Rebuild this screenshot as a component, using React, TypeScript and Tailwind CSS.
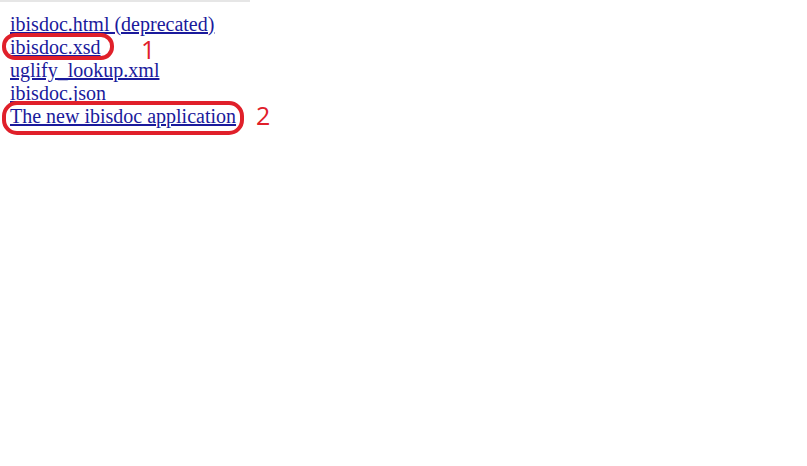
const links = [
  "ibisdoc.html (deprecated)",
  "ibisdoc.xsd",
  "uglify_lookup.xml",
  "ibisdoc.json",
  "The new ibisdoc application",
];

const App = () => {
  return (
    <div className="relative w-[807px] h-[466px] bg-white overflow-hidden">
      <div className="w-[250px] h-[2px] bg-[#e6e6e6]" />
      <ul className="pl-[10px] pt-[11px] font-['Liberation_Serif',serif] text-[20px] leading-[23px]">
        {links.map((l) => (
          <li key={l}>
            <a href="#" className="text-[#1a1a9c] underline">
              {l}
            </a>
          </li>
        ))}
      </ul>

      {/* annotations */}
      <div className="absolute left-[2px] top-[33px] w-[112px] h-[27px] rounded-[13px] border-[4px] border-[#e0202a]" />
      <span className="absolute left-[141px] top-[40px] text-[25px] leading-[18px] text-[#e0202a] font-['Open_Sans',sans-serif]">
        1
      </span>
      <div className="absolute left-[2px] top-[101px] w-[242px] h-[34px] rounded-[15px] border-[4px] border-[#e0202a]" />
      <span className="absolute left-[256px] top-[106px] text-[25px] leading-[18px] text-[#e0202a] font-['Open_Sans',sans-serif]">
        2
      </span>
    </div>
  );
};

export default App;
